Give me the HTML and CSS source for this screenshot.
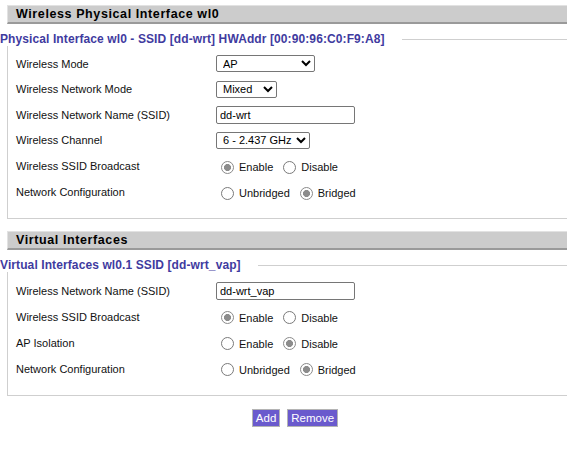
FILE: index.html
```html
<!DOCTYPE html>
<html>
<head>
<meta charset="utf-8">
<link rel="stylesheet" href="styles.css">
</head>
<body>
<div class="page">
  <h2 class="sect-title">Wireless Physical Interface wl0</h2>
  <fieldset class="group">
    <legend>Physical Interface wl0 - SSID [dd-wrt] HWAddr [00:90:96:C0:F9:A8]</legend>
    <div class="row">
      <div class="label">Wireless Mode</div>
      <select class="sel w-mode"><option>AP</option></select>
    </div>
    <div class="row">
      <div class="label">Wireless Network Mode</div>
      <select class="sel w-net"><option>Mixed</option></select>
    </div>
    <div class="row">
      <div class="label">Wireless Network Name (SSID)</div>
      <input class="txt" type="text" value="dd-wrt">
    </div>
    <div class="row">
      <div class="label">Wireless Channel</div>
      <select class="sel w-chan"><option>6 - 2.437 GHz</option></select>
    </div>
    <div class="row radio-row">
      <div class="label">Wireless SSID Broadcast</div>
      <label class="opt"><input type="radio" name="b1" checked>Enable</label>
      <label class="opt"><input type="radio" name="b1">Disable</label>
    </div>
    <div class="row radio-row">
      <div class="label">Network Configuration</div>
      <label class="opt"><input type="radio" name="n1">Unbridged</label>
      <label class="opt"><input type="radio" name="n1" checked>Bridged</label>
    </div>
  </fieldset>

  <h2 class="sect-title sect-two">Virtual Interfaces</h2>
  <fieldset class="group group-two">
    <legend>Virtual Interfaces wl0.1 SSID [dd-wrt_vap]</legend>
    <div class="row">
      <div class="label">Wireless Network Name (SSID)</div>
      <input class="txt" type="text" value="dd-wrt_vap">
    </div>
    <div class="row radio-row">
      <div class="label">Wireless SSID Broadcast</div>
      <label class="opt"><input type="radio" name="b2" checked>Enable</label>
      <label class="opt"><input type="radio" name="b2">Disable</label>
    </div>
    <div class="row radio-row">
      <div class="label">AP Isolation</div>
      <label class="opt"><input type="radio" name="i2">Enable</label>
      <label class="opt"><input type="radio" name="i2" checked>Disable</label>
    </div>
    <div class="row radio-row">
      <div class="label">Network Configuration</div>
      <label class="opt"><input type="radio" name="n2">Unbridged</label>
      <label class="opt"><input type="radio" name="n2" checked>Bridged</label>
    </div>
  </fieldset>

  <div class="actions">
    <button class="btn" type="button">Add</button>
    <button class="btn" type="button">Remove</button>
  </div>
</div>
</body>
</html>
```
FILE: styles.css
```css
html {
  overflow: hidden;
}
body {
  margin: 0;
  background: #fff;
  font-family: "Liberation Sans", Arial, sans-serif;
  font-size: 11px;
  color: #111;
}
.page {
  width: 590px;
  padding-top: 5px;
}
.sect-title {
  margin: 0 0 8px 7px;
  height: 16px;
  line-height: 16px;
  padding-left: 8px;
  background: #cccccc;
  border-top: 1px solid #e2e2e2;
  border-left: 1px solid #e2e2e2;
  border-bottom: 2px solid #9a9a9a;
  font-size: 12.5px;
  font-weight: bold;
  letter-spacing: 0.6px;
  color: #000;
}
.sect-two {
  margin-top: 12px;
}
.group {
  margin: 0 0 0 7px;
  padding: 5px 0 13px 8px;
  border: 1px solid #cfcfcf;
  border-right: none;
  min-width: 0;
}
.group-two {
  padding-top: 6px;
  padding-bottom: 13.5px;
}
.group legend {
  margin-left: -16px;
  padding: 0 17px 0 0;
  line-height: 14px;
  font-size: 12px;
  letter-spacing: 0.1px;
  font-weight: bold;
  color: #3f3b9f;
}
.row {
  display: flex;
  align-items: center;
  height: 25.5px;
}
.radio-row {
  height: 26px;
}
.label {
  width: 200px;
  flex: none;
}
.sel {
  height: 17px;
  padding: 0 0 0 2px;
  border: 1px solid #767676;
  border-radius: 2px;
  background: #fff;
  font-family: inherit;
  font-size: 11px;
  color: #000;
}
.w-mode { width: 99px; }
.w-net { width: 61px; }
.w-chan { width: 94px; }
.txt {
  box-sizing: border-box;
  width: 139px;
  height: 18px;
  padding: 0 3px;
  margin: 0;
  border: 1px solid #767676;
  border-radius: 2px;
  font-family: inherit;
  font-size: 11px;
  color: #000;
}
.opt {
  display: inline-flex;
  align-items: center;
  margin-right: 5px;
  padding-top: 2px;
}
.opt input {
  appearance: none;
  -webkit-appearance: none;
  box-sizing: border-box;
  width: 13px;
  height: 13px;
  margin: 0 5px 0 5px;
  border: 1px solid #7a7a7a;
  border-radius: 50%;
  background: #fff;
}
.opt input:checked {
  border-color: #8a8a8a;
  background: radial-gradient(circle, #8c8c8c 0 3.2px, #fff 3.8px);
}
.actions {
  display: flex;
  justify-content: center;
  gap: 7px;
  margin-top: 13px;
}
.btn {
  height: 18px;
  padding: 0 3px;
  border: 1px solid #b4b4b4;
  background: #6a5acd;
  color: #fff;
  font-family: inherit;
  font-size: 11.5px;
  line-height: 16px;
}
```
